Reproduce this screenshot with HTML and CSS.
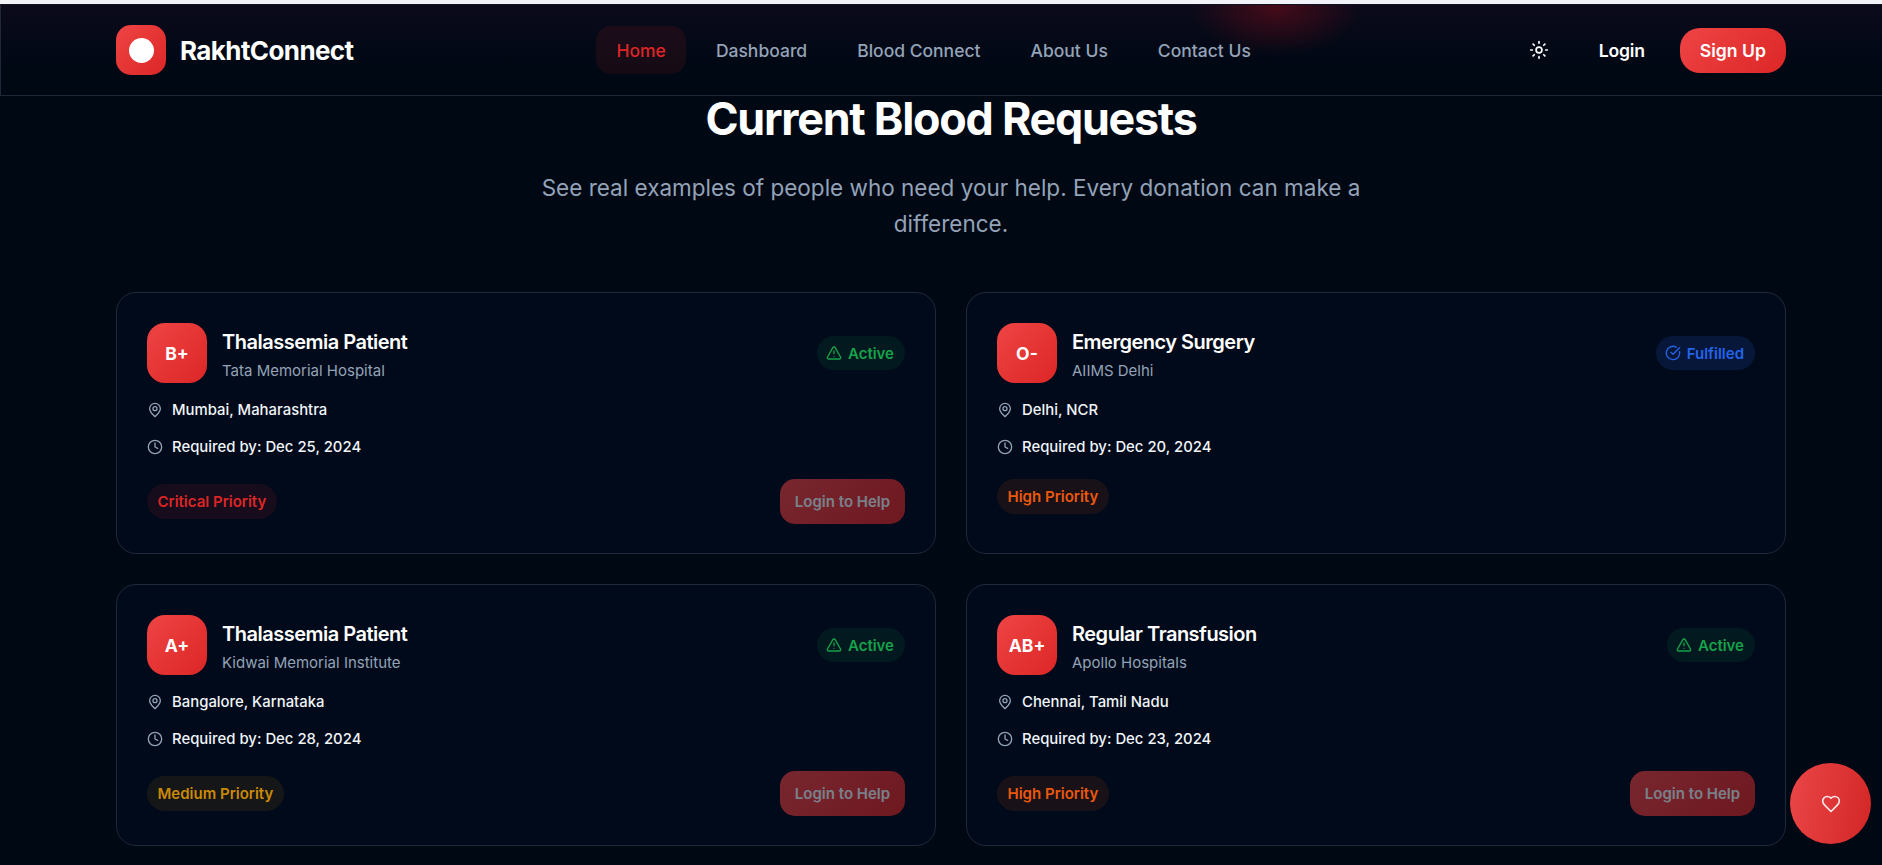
FILE: index.html
```html
<!DOCTYPE html>
<html lang="en">
<head>
<meta charset="utf-8">
<title>RakhtConnect</title>
<link rel="stylesheet" href="styles.css">
</head>
<body>
<header class="header">
  <div class="glow"></div>
  <div class="brand">
    <div class="logo"><span class="logo-dot"></span></div>
    <span class="brand-name">RakhtConnect</span>
  </div>
  <nav class="nav">
    <a class="nav-link active">Home</a>
    <a class="nav-link">Dashboard</a>
    <a class="nav-link">Blood Connect</a>
    <a class="nav-link">About Us</a>
    <a class="nav-link">Contact Us</a>
  </nav>
  <div class="actions">
    <button class="theme">
      <svg class="sun" viewBox="0 0 24 24" fill="none" stroke="currentColor" stroke-width="2" stroke-linecap="round" stroke-linejoin="round"><circle cx="12" cy="12" r="3.5"/><path d="M12 2v2M12 20v2M4.93 4.93l1.41 1.41M17.66 17.66l1.41 1.41M2 12h2M20 12h2M6.34 17.66l-1.41 1.41M19.07 4.93l-1.41 1.41"/></svg>
    </button>
    <a class="login">Login</a>
    <a class="signup">Sign Up</a>
  </div>
</header>
<main class="main">
  <h1 class="title">Current Blood Requests</h1>
  <p class="subtitle">See real examples of people who need your help. Every donation can make a difference.</p>
  <section class="grid">

    <article class="card">
      <div class="card-top">
        <div class="who">
          <div class="blood">B+</div>
          <div><h3 class="case">Thalassemia Patient</h3><p class="hospital">Tata Memorial Hospital</p></div>
        </div>
        <span class="status active-status"><svg class="status-icon" viewBox="0 0 24 24" fill="none" stroke="currentColor" stroke-width="2" stroke-linecap="round" stroke-linejoin="round"><path d="m21.73 18-8-14a2 2 0 0 0-3.48 0l-8 14A2 2 0 0 0 4 21h16a2 2 0 0 0 1.73-3"/><path d="M12 9v4M12 17h.01"/></svg>Active</span>
      </div>
      <div class="info"><svg class="info-icon" viewBox="0 0 24 24" fill="none" stroke="currentColor" stroke-width="2" stroke-linecap="round" stroke-linejoin="round"><path d="M20 10c0 5-5.5 9.2-7.4 11.7a1 1 0 0 1-1.2 0C9.5 19.2 4 15 4 10a8 8 0 0 1 16 0"/><circle cx="12" cy="10" r="3"/></svg>Mumbai, Maharashtra</div>
      <div class="info"><svg class="info-icon" viewBox="0 0 24 24" fill="none" stroke="currentColor" stroke-width="2" stroke-linecap="round" stroke-linejoin="round"><circle cx="12" cy="12" r="10"/><path d="M12 6v6l4 2"/></svg>Required by: Dec 25, 2024</div>
      <div class="card-foot">
        <span class="priority critical">Critical Priority</span>
        <button class="help">Login to Help</button>
      </div>
    </article>

    <article class="card">
      <div class="card-top">
        <div class="who">
          <div class="blood">O-</div>
          <div><h3 class="case">Emergency Surgery</h3><p class="hospital">AIIMS Delhi</p></div>
        </div>
        <span class="status fulfilled-status"><svg class="status-icon" viewBox="0 0 24 24" fill="none" stroke="currentColor" stroke-width="2" stroke-linecap="round" stroke-linejoin="round"><path d="M21.8 10A10 10 0 1 1 17 3.3"/><path d="m9 11 3 3L22 4"/></svg>Fulfilled</span>
      </div>
      <div class="info"><svg class="info-icon" viewBox="0 0 24 24" fill="none" stroke="currentColor" stroke-width="2" stroke-linecap="round" stroke-linejoin="round"><path d="M20 10c0 5-5.5 9.2-7.4 11.7a1 1 0 0 1-1.2 0C9.5 19.2 4 15 4 10a8 8 0 0 1 16 0"/><circle cx="12" cy="10" r="3"/></svg>Delhi, NCR</div>
      <div class="info"><svg class="info-icon" viewBox="0 0 24 24" fill="none" stroke="currentColor" stroke-width="2" stroke-linecap="round" stroke-linejoin="round"><circle cx="12" cy="12" r="10"/><path d="M12 6v6l4 2"/></svg>Required by: Dec 20, 2024</div>
      <div class="card-foot">
        <span class="priority high">High Priority</span>
      </div>
    </article>

    <article class="card">
      <div class="card-top">
        <div class="who">
          <div class="blood">A+</div>
          <div><h3 class="case">Thalassemia Patient</h3><p class="hospital">Kidwai Memorial Institute</p></div>
        </div>
        <span class="status active-status"><svg class="status-icon" viewBox="0 0 24 24" fill="none" stroke="currentColor" stroke-width="2" stroke-linecap="round" stroke-linejoin="round"><path d="m21.73 18-8-14a2 2 0 0 0-3.48 0l-8 14A2 2 0 0 0 4 21h16a2 2 0 0 0 1.73-3"/><path d="M12 9v4M12 17h.01"/></svg>Active</span>
      </div>
      <div class="info"><svg class="info-icon" viewBox="0 0 24 24" fill="none" stroke="currentColor" stroke-width="2" stroke-linecap="round" stroke-linejoin="round"><path d="M20 10c0 5-5.5 9.2-7.4 11.7a1 1 0 0 1-1.2 0C9.5 19.2 4 15 4 10a8 8 0 0 1 16 0"/><circle cx="12" cy="10" r="3"/></svg>Bangalore, Karnataka</div>
      <div class="info"><svg class="info-icon" viewBox="0 0 24 24" fill="none" stroke="currentColor" stroke-width="2" stroke-linecap="round" stroke-linejoin="round"><circle cx="12" cy="12" r="10"/><path d="M12 6v6l4 2"/></svg>Required by: Dec 28, 2024</div>
      <div class="card-foot">
        <span class="priority medium">Medium Priority</span>
        <button class="help">Login to Help</button>
      </div>
    </article>

    <article class="card">
      <div class="card-top">
        <div class="who">
          <div class="blood">AB+</div>
          <div><h3 class="case">Regular Transfusion</h3><p class="hospital">Apollo Hospitals</p></div>
        </div>
        <span class="status active-status"><svg class="status-icon" viewBox="0 0 24 24" fill="none" stroke="currentColor" stroke-width="2" stroke-linecap="round" stroke-linejoin="round"><path d="m21.73 18-8-14a2 2 0 0 0-3.48 0l-8 14A2 2 0 0 0 4 21h16a2 2 0 0 0 1.73-3"/><path d="M12 9v4M12 17h.01"/></svg>Active</span>
      </div>
      <div class="info"><svg class="info-icon" viewBox="0 0 24 24" fill="none" stroke="currentColor" stroke-width="2" stroke-linecap="round" stroke-linejoin="round"><path d="M20 10c0 5-5.5 9.2-7.4 11.7a1 1 0 0 1-1.2 0C9.5 19.2 4 15 4 10a8 8 0 0 1 16 0"/><circle cx="12" cy="10" r="3"/></svg>Chennai, Tamil Nadu</div>
      <div class="info"><svg class="info-icon" viewBox="0 0 24 24" fill="none" stroke="currentColor" stroke-width="2" stroke-linecap="round" stroke-linejoin="round"><circle cx="12" cy="12" r="10"/><path d="M12 6v6l4 2"/></svg>Required by: Dec 23, 2024</div>
      <div class="card-foot">
        <span class="priority high">High Priority</span>
        <button class="help">Login to Help</button>
      </div>
    </article>

  </section>
</main>
<button class="fab"><svg class="heart" viewBox="0 0 24 24" fill="none" stroke="currentColor" stroke-width="2" stroke-linecap="round" stroke-linejoin="round"><path d="M19 14c1.49-1.46 3-3.21 3-5.5A5.5 5.5 0 0 0 16.5 3c-1.76 0-3 .5-4.5 2-1.5-1.5-2.74-2-4.5-2A5.5 5.5 0 0 0 2 8.5c0 2.3 1.5 4.05 3 5.5l7 7Z"/></svg></button>
</body>
</html>
```
FILE: styles.css
```css
* { box-sizing: border-box; }
html, body { height: 100%; }
body {
  margin: 0;
  padding-top: 4px;
  height: 865px;
  overflow: hidden;
  background: #000814;
  font-family: Inter, "Liberation Sans", sans-serif;
  color: #fff;
  position: relative;
}
body::before {
  content: "";
  position: absolute;
  top: 0; left: 0; right: 0;
  height: 4px;
  background: #f1f3f9;
}
.header {
  position: relative;
  height: 92px;
  padding: 0 96px 0 115px;
  display: flex;
  align-items: center;
  justify-content: space-between;
  border: 1px solid #1f2738;
  border-right: 0;
  border-top-color: #10131f;
  background: linear-gradient(180deg, #0b0a1a 0%, #000814 70%);
  overflow: hidden;
}
.glow {
  position: absolute;
  top: -45px;
  left: 1190px;
  width: 170px;
  height: 95px;
  background: radial-gradient(closest-side, rgba(150, 12, 24, .42), rgba(150, 12, 24, 0));
}
.brand { display: flex; align-items: center; gap: 14px; position: relative; }
.logo {
  width: 50px; height: 50px;
  border-radius: 15px;
  background: linear-gradient(135deg, #ef4444, #dc2626);
  display: flex; align-items: center; justify-content: center;
}
.logo-dot { width: 25px; height: 25px; border-radius: 50%; background: #fff; }
.brand-name { font-size: 26px; font-weight: 700; letter-spacing: -0.6px; }
.nav { display: flex; gap: 10px; position: relative; }
.nav-link {
  padding: 0 20px;
  height: 48px;
  display: flex; align-items: center;
  border-radius: 15px;
  font-size: 17.5px;
  font-weight: 500;
  color: #94a3b8;
}
.nav-link.active { color: #dc2626; background: rgba(220, 38, 38, .1); }
.actions { display: flex; align-items: center; gap: 15px; position: relative; }
.theme {
  width: 50px; height: 50px;
  padding: 0;
  border: 0;
  background: none;
  color: #fff;
  display: flex; align-items: center; justify-content: center;
}
.sun { width: 20px; height: 20px; }
.login { padding: 0 20px; font-size: 17.6px; font-weight: 600; letter-spacing: -0.2px; }
.signup {
  height: 45px;
  padding: 0 20px;
  display: flex; align-items: center;
  border-radius: 20px;
  background: linear-gradient(135deg, #ef4444, #dc2626);
  font-size: 17.6px;
  font-weight: 600;
}
.main { padding: 0 96px 0 116px; }
.title {
  margin: 0;
  height: 50px;
  line-height: 46px;
  text-align: center;
  font-size: 44.8px;
  font-weight: 700;
  letter-spacing: -1.25px;
}
.subtitle {
  width: 840px;
  margin: 24px auto 50px;
  text-align: center;
  font-size: 22.5px;
  line-height: 36px;
  color: #94a3b8;
}
.grid {
  display: grid;
  grid-template-columns: 1fr 1fr;
  gap: 30px;
}
.card {
  height: 262px;
  padding: 30px;
  border: 1px solid #1e293b;
  border-radius: 20px;
  background: #000a1a;
}
.card-top { display: flex; justify-content: space-between; align-items: center; margin-bottom: 15px; }
.who { display: flex; align-items: center; gap: 15px; }
.blood {
  width: 60px; height: 60px;
  border-radius: 18px;
  background: linear-gradient(135deg, #ef4444, #dc2626);
  display: flex; align-items: center; justify-content: center;
  font-size: 17.6px;
  font-weight: 700;
}
.case { margin: 4px 0 3px; font-size: 20px; line-height: 28px; font-weight: 600; letter-spacing: -0.5px; }
.hospital { margin: 0; font-size: 15px; line-height: 23px; color: #94a3b8; }
.status {
  height: 34px;
  padding: 0 11px 0 9px;
  display: flex; align-items: center; gap: 6px;
  border-radius: 17px;
  font-size: 15px;
  font-weight: 600;
}
.status-icon { width: 16px; height: 16px; }
.active-status { color: #16a34a; background: rgba(22, 163, 74, .1); }
.fulfilled-status { color: #2563eb; background: rgba(37, 99, 235, .15); }
.info {
  display: flex; align-items: center; gap: 9px;
  height: 23px;
  margin-bottom: 14.5px;
  font-size: 14.88px;
  font-weight: 450;
  color: #f1f5f9;
}
.info-icon { width: 16px; height: 16px; color: #94a3b8; }
.card-foot { display: flex; align-items: center; justify-content: space-between; margin-top: 20px; }
.priority {
  height: 35px;
  padding: 0 10.5px;
  display: flex; align-items: center;
  border-radius: 17.5px;
  font-size: 15px;
  font-weight: 600;
}
.critical { color: #dc2626; background: rgba(220, 38, 38, .1); }
.high { color: #ea580c; background: rgba(234, 88, 12, .1); }
.medium { color: #ca8a04; background: rgba(202, 138, 4, .1); }
.help {
  width: 125px; height: 45px;
  padding: 0;
  border: 0;
  border-radius: 15px;
  background: linear-gradient(135deg, #ef4444, #dc2626);
  opacity: .5;
  font-family: inherit;
  font-size: 15px;
  font-weight: 600;
  color: #f1f5f9;
}
.fab {
  position: fixed;
  left: 1790px;
  top: 763px;
  width: 81px; height: 81px;
  padding: 0;
  border: 0;
  border-radius: 50%;
  background: linear-gradient(100deg, #ea4648, #d32626);
  color: #f4e6e6;
  display: flex; align-items: center; justify-content: center;
}
.heart { width: 20px; height: 20px; }
```
